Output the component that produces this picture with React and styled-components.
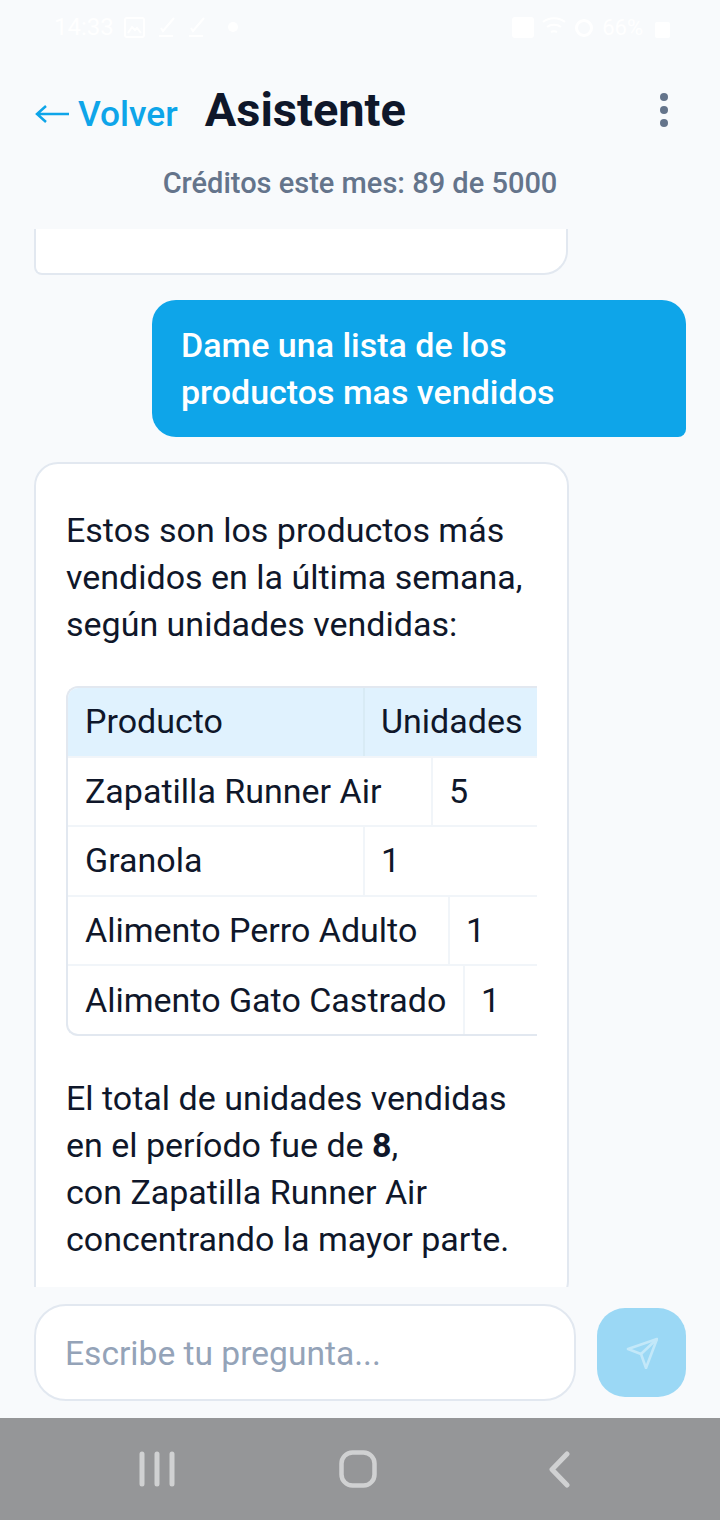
import React from "react";
import styled, { createGlobalStyle } from "styled-components";

const GlobalStyle = createGlobalStyle`
  html, body {
    margin: 0;
    padding: 0;
    background: #f8fafc;
  }
  * {
    box-sizing: border-box;
  }
`;

const Page = styled.div`
  width: 720px;
  height: 1520px;
  display: flex;
  flex-direction: column;
  overflow: hidden;
  background: #f8fafc;
  font-family: Roboto, "Liberation Sans", sans-serif;
  color: #0f172a;
`;

const StatusBar = styled.div`
  height: 54px;
  padding: 0 50px 0 54px;
  display: flex;
  align-items: center;
  justify-content: space-between;
  color: #ffffff;
  font-size: 24px;
`;

const StatusGroup = styled.div`
  display: flex;
  align-items: center;
  gap: ${(p) => p.$gap}px;
`;

const StatusGlyph = styled.svg`
  margin-left: ${(p) => p.$left || 0}px;
  margin-top: ${(p) => p.$top || 0}px;
`;

const StatusPercent = styled.span`
  font-size: 22px;
`;

const Header = styled.header`
  height: 175px;
  padding: 31px 34px 0;
  display: flex;
  flex-direction: column;
`;

const HeaderRow = styled.div`
  height: 50px;
  display: flex;
  align-items: center;
`;

const BackLink = styled.a`
  display: flex;
  align-items: center;
  gap: 9px;
  margin-top: 8px;
  color: #0ea5e9;
  font-size: 35.3px;
  font-weight: 500;
`;

const Title = styled.h1`
  margin: 0 0 2px 27px;
  font-size: 47px;
  font-weight: 700;
  color: #0f172a;
`;

const MenuButton = styled.div`
  margin-left: auto;
  margin-right: 18px;
  display: flex;
  flex-direction: column;
  gap: 5px;
`;

const MenuDot = styled.span`
  width: 8px;
  height: 8px;
  border-radius: 50%;
  background: #64748b;
`;

const Credits = styled.div`
  margin-top: 31px;
  text-align: center;
  font-size: 29px;
  font-weight: 500;
  color: #64748b;
`;

const Chat = styled.main`
  flex: 1;
  min-height: 0;
  overflow: hidden;
  padding: 0 34px;
  display: flex;
  flex-direction: column;
`;

const ClippedCard = styled.div`
  width: 534px;
  height: 46px;
  flex: none;
  background: #ffffff;
  border: 2px solid #e2e8f0;
  border-top: 0;
  border-radius: 0 0 24px 8px;
`;

const UserBubble = styled.div`
  align-self: flex-end;
  flex: none;
  width: 534px;
  height: 137px;
  margin-top: 25px;
  padding: 22px 29px;
  background: #0ea5e9;
  border-radius: 24px 24px 8px 24px;
  color: #ffffff;
  font-size: 34px;
  font-weight: 500;
  line-height: 47px;
`;

const BotCard = styled.div`
  flex: none;
  width: 535px;
  margin-top: 25px;
  padding: 43px 30px 40px;
  background: #ffffff;
  border: 2px solid #e2e8f0;
  border-radius: 24px 24px 24px 8px;
  font-size: 34px;
  line-height: 47px;
`;

const Paragraph = styled.p`
  margin: 0;
`;

const Table = styled.div`
  width: 471px;
  height: 350px;
  margin: 38px 0 39px;
  overflow: hidden;
  border: 2px solid #e2e8f0;
  border-right: 0;
  border-radius: 12px 0 0 12px;
  display: flex;
  flex-direction: column;
`;

const TableRow = styled.div`
  flex: 1;
  display: flex;
  align-items: stretch;
  background: ${(p) => (p.$head ? "#e0f2fe" : "transparent")};
  & + & {
    border-top: 2px solid #f1f5f9;
  }
`;

const NameCell = styled.div`
  flex: none;
  width: ${(p) => p.$width}px;
  display: flex;
  align-items: center;
  padding: 0 17px;
  white-space: nowrap;
  border-right: 2px solid ${(p) => (p.$head ? "#d8ebf5" : "#f1f5f9")};
`;

const ValueCell = styled.div`
  display: flex;
  align-items: center;
  padding: 0 16px;
  white-space: nowrap;
`;

const Composer = styled.footer`
  height: 131px;
  flex: none;
  padding: 17px 34px 0;
  display: flex;
  gap: 21px;
`;

const Input = styled.div`
  width: 542px;
  height: 97px;
  padding: 2px 29px 0;
  display: flex;
  align-items: center;
  background: #ffffff;
  border: 2px solid #e2e8f0;
  border-radius: 32px;
  color: #94a3b8;
  font-size: 33.6px;
`;

const SendButton = styled.div`
  width: 89px;
  height: 89px;
  margin-top: 4px;
  display: flex;
  align-items: center;
  justify-content: center;
  background: #9bd8f5;
  border-radius: 28px;
`;

const NavBar = styled.nav`
  height: 102px;
  flex: none;
  background: #959698;
  display: flex;
  align-items: center;
  padding-left: 139px;
`;

const NavGlyph = styled.svg`
  margin-left: ${(p) => p.$left || 0}px;
`;

const rows = [
  { name: "Zapatilla Runner Air", width: 365, value: "5" },
  { name: "Granola", width: 297, value: "1" },
  { name: "Alimento Perro Adulto", width: 382, value: "1" },
  { name: "Alimento Gato Castrado", width: 397, value: "1" },
];

function StatusIcons() {
  return (
    <StatusBar>
      <StatusGroup $gap={10}>
        <span>14:33</span>
        <StatusGlyph width="21" height="21" viewBox="0 0 21 21" fill="none" stroke="#fff" strokeWidth="2">
          <rect x="1" y="1" width="19" height="19" rx="2" />
          <path d="M4 16l4-6 3 3 2-2 4 5" />
        </StatusGlyph>
        <StatusGlyph $left={2} width="20" height="22" viewBox="0 0 20 22" fill="none" stroke="#fff" strokeWidth="2">
          <path d="M4 12l2 3L17 2M2 20h14" />
        </StatusGlyph>
        <StatusGlyph width="20" height="22" viewBox="0 0 20 22" fill="none" stroke="#fff" strokeWidth="2">
          <path d="M4 12l2 3L17 2M2 20h14" />
        </StatusGlyph>
        <StatusGlyph $left={11} width="10" height="10" viewBox="0 0 10 10" fill="#fff">
          <circle cx="5" cy="5" r="5" />
        </StatusGlyph>
      </StatusGroup>
      <StatusGroup $gap={8}>
        <StatusGlyph width="22" height="21" viewBox="0 0 22 21" fill="#fff">
          <rect width="22" height="21" rx="3" />
        </StatusGlyph>
        <StatusGlyph width="24" height="22" viewBox="0 0 24 22" fill="none" stroke="#fff" strokeWidth="2">
          <path d="M1 6c6-5 16-5 22 0M5 11c4-3 10-3 14 0M9 16c2-1 4-1 6 0" />
        </StatusGlyph>
        <StatusGlyph width="20" height="21" viewBox="0 0 20 21" fill="none" stroke="#fff" strokeWidth="3">
          <circle cx="10" cy="11" r="7.5" />
        </StatusGlyph>
        <StatusPercent>66%</StatusPercent>
        <StatusGlyph $left={4} $top={6} width="15" height="16" viewBox="0 0 15 16" fill="#fff">
          <rect width="15" height="16" rx="2" />
        </StatusGlyph>
      </StatusGroup>
    </StatusBar>
  );
}

export default function App() {
  return (
    <Page>
      <GlobalStyle />
      <StatusIcons />
      <Header>
        <HeaderRow>
          <BackLink>
            <svg width="35" height="20" viewBox="0 0 35 20" fill="none" stroke="#0ea5e9" strokeWidth="2.5">
              <path d="M35 10H3M12 2l-9 8 9 8" />
            </svg>
            Volver
          </BackLink>
          <Title>Asistente</Title>
          <MenuButton>
            <MenuDot />
            <MenuDot />
            <MenuDot />
          </MenuButton>
        </HeaderRow>
        <Credits>Créditos este mes: 89 de 5000</Credits>
      </Header>
      <Chat>
        <ClippedCard />
        <UserBubble>
          Dame una lista de los
          <br />
          productos mas vendidos
        </UserBubble>
        <BotCard>
          <Paragraph>
            Estos son los productos más
            <br />
            vendidos en la última semana,
            <br />
            según unidades vendidas:
          </Paragraph>
          <Table>
            <TableRow $head>
              <NameCell $head $width={297}>Producto</NameCell>
              <ValueCell>Unidades</ValueCell>
            </TableRow>
            {rows.map((row) => (
              <TableRow key={row.name}>
                <NameCell $width={row.width}>{row.name}</NameCell>
                <ValueCell>{row.value}</ValueCell>
              </TableRow>
            ))}
          </Table>
          <Paragraph>
            El total de unidades vendidas
            <br />
            en el período fue de <strong>8</strong>,
            <br />
            con Zapatilla Runner Air
            <br />
            concentrando la mayor parte.
          </Paragraph>
        </BotCard>
      </Chat>
      <Composer>
        <Input>Escribe tu pregunta...</Input>
        <SendButton>
          <svg width="32" height="32" viewBox="0 0 32 32" fill="none" stroke="#c3e8f9" strokeWidth="2.6" strokeLinejoin="round">
            <path d="M31 2L2 12l13 5 5 14z" />
            <path d="M31 2L15 17" />
          </svg>
        </SendButton>
      </Composer>
      <NavBar>
        <NavGlyph width="36" height="36" viewBox="0 0 36 36" fill="none" stroke="#d0d1d2" strokeWidth="5" strokeLinecap="round">
          <path d="M3 3v30M18 3v30M33 3v30" />
        </NavGlyph>
        <NavGlyph $left={164} width="38" height="38" viewBox="0 0 38 38" fill="none" stroke="#d0d1d2" strokeWidth="4.5">
          <rect x="2.5" y="2.5" width="33" height="33" rx="11" />
        </NavGlyph>
        <NavGlyph $left={171} width="22" height="37" viewBox="0 0 22 37" fill="none" stroke="#d0d1d2" strokeWidth="5" strokeLinecap="round" strokeLinejoin="round">
          <path d="M19 3L4 18.5 19 34" />
        </NavGlyph>
      </NavBar>
    </Page>
  );
}
